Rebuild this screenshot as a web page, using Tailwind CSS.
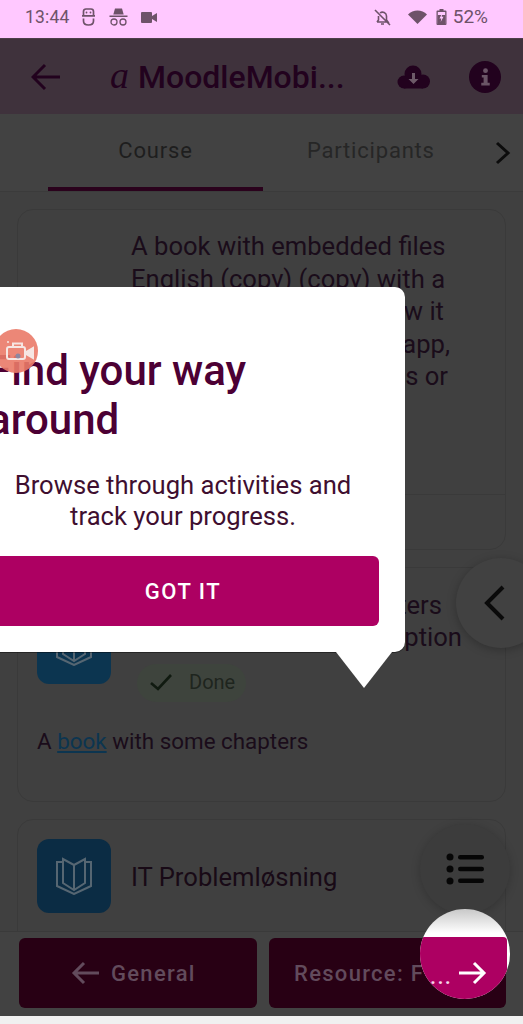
<!DOCTYPE html>
<html lang="en">
<head>
    <meta charset="UTF-8">
    <meta name="viewport" content="width=device-width, initial-scale=1.0">
    <title>MoodleMobile</title>
    <script src="https://cdn.jsdelivr.net/npm/@tailwindcss/browser@4"></script>
</head>
<body class="bg-[#f0f0f0]">
<div class="relative w-[523px] h-[1024px] overflow-hidden flex flex-col font-['Roboto',sans-serif] text-[#2a1027]">

    <!-- Status bar -->
    <div class="h-[38px] shrink-0 bg-[#ffc8ff] flex items-center pb-[4px] pl-[25px] pr-[35px] text-[#6e5269]">
        <span class="text-[17.5px] tracking-[0.2px]">13:44</span>
        <svg class="ml-[12px] w-[13px] h-[18px]" viewBox="0 0 13 18" fill="none" stroke="currentColor" stroke-width="1.700"><path d="M1.500 7V3.500C1.500 2 2.500 1 4 1h5c1.500 0 2.500 1 2.500 2.500V7M0 7.800h13M1.500 10.500v2.500c0 2.500 2 4 5 4s5-1.500 5-4v-2.500"/><circle cx="4.500" cy="4.500" r=".9" fill="currentColor" stroke="none"/><circle cx="8.500" cy="4.500" r=".9" fill="currentColor" stroke="none"/></svg>
        <svg class="ml-[14px] w-[19px] h-[18px]" viewBox="0 0 19 18" fill="currentColor"><path d="M6 0.500h7l1.700 6H4.300zM0.500 7.500h18v1.600H0.500z"/><circle cx="5" cy="14" r="3" fill="none" stroke="currentColor" stroke-width="1.300"/><circle cx="14" cy="14" r="3" fill="none" stroke="currentColor" stroke-width="1.300"/></svg>
        <svg class="ml-[13px] w-[16px] h-[11px]" viewBox="0 0 16 11" fill="currentColor"><rect width="11" height="11" rx="1"/><path d="M11 4l5-3v9l-5-3z"/></svg>
        <svg class="ml-auto w-[17px] h-[17px]" viewBox="0 0 17 17" fill="none" stroke="currentColor" stroke-width="1.600"><path d="M3 13h11l-1.500-2V7A4 4 0 0 0 6 4M4.500 7v4L3 13M7 15h3M1 1l15 15"/></svg>
        <svg class="ml-[17px] w-[19px] h-[14px]" viewBox="0 0 19 14" fill="currentColor"><path d="M0 4.500C5-1 14-1 19 4.500L9.500 14z"/></svg>
        <svg class="ml-[9px] w-[11px] h-[16px]" viewBox="0 0 10 16" fill="currentColor"><path d="M3 0h4v1.500h2a1 1 0 0 1 1 1V15a1 1 0 0 1-1 1H1a1 1 0 0 1-1-1V2.500a1 1 0 0 1 1-1h2zM1.300 3v11.700h7.400V3z"/><path d="M1.300 6h7.400v9H1.300z"/><path d="M5.800 4L3 9.500h1.800L4.200 13 7 7.800H5.200z" fill="#ffc8ff"/></svg>
        <span class="ml-[6px] text-[19px]">52%</span>
    </div>

    <!-- App bar -->
    <div class="h-[76px] shrink-0 bg-[#3f323c] border-t border-[#4d3e4a] flex items-center pl-[31px] pr-[22px] text-[#22021e]">
        <svg class="w-[29px] h-[28px]" viewBox="0 0 29 28" fill="none" stroke="currentColor" stroke-width="3"><path d="M29 14H3M14 2L2 14l12 12"/></svg>
        <span class="ml-[50px] mt-[-4px] font-['Liberation_Serif',serif] italic text-[38px] leading-none">a</span>
        <span class="ml-[9px] text-[32px] font-medium leading-none">MoodleMobi...</span>
        <svg class="ml-auto w-[33px] h-[24px]" viewBox="0 0 33 24" fill="currentColor"><circle cx="7" cy="17" r="6.500"/><circle cx="16" cy="9" r="8.500"/><circle cx="26" cy="16.500" r="7"/><rect x="7" y="12" width="19" height="11.500"/><path d="M15 8h3v6h3.500l-5 5-5-5H15z" fill="#6d5a68"/></svg>
        <div class="ml-[39px] w-[32px] h-[32px] rounded-full bg-current flex items-center justify-center">
            <svg class="w-[11px] h-[18px]" viewBox="0 0 10 17" fill="#6a5566"><circle cx="5" cy="2.500" r="2.300"/><path d="M1.500 6.500h5.500v7.500H9v2.500H1v-2.500h2.200v-5H1.500z"/></svg>
        </div>
    </div>

    <!-- Tabs -->
    <div class="relative h-[78px] shrink-0 bg-[#424242] border-b border-[#3b3b3b] flex text-[22px] tracking-[0.8px] text-[#1e1e1e]">
        <div class="ml-[48px] w-[215px] h-full flex justify-center pt-[20px] border-b-[4px] border-[#2a021c]">Course</div>
        <div class="ml-[44px] pt-[20px] text-[#262626]">Participants</div>
        <svg class="absolute left-[495px] top-[27px] w-[16px] h-[24px]" viewBox="0 0 16 24" fill="none" stroke="#0c0c0c" stroke-width="3"><path d="M2 2l11 10L2 22"/></svg>
    </div>

    <!-- Course content -->
    <div class="flex-1 min-h-0 overflow-hidden bg-[#404040] px-[17px] pt-[17px] flex flex-col gap-[17px] text-[25.6px] leading-[32.500px] text-[#1a0c1a]">
        <div class="h-[341px] shrink-0 rounded-[16px] border border-[#3a3a3a] flex flex-col">
            <div class="flex-1 pl-[113px] pt-[20px]">
                <p>A book with embedded files</p>
                <p>English (copy) (copy) with a</p>
                <p class="text-right pr-[61px]">how it</p>
                <p class="text-right pr-[55px]">app,</p>
                <p class="text-right pr-[57px]">ss or</p>
            </div>
            <div class="h-[55px] border-t border-[#3a3a3a]"></div>
        </div>

        <div class="h-[235px] shrink-0 rounded-[16px] border border-[#3a3a3a] px-[19px] pt-[21px]">
            <div class="flex gap-[20px]">
                <div class="w-[74px] h-[74px] mt-[21px] shrink-0 rounded-[12px] bg-[#0c3550] flex items-center justify-center">
                    <svg class="w-[38px] h-[38px]" viewBox="0 0 38 38" fill="none" stroke="#566672" stroke-width="2"><path d="M19 8L8 2v24l11 7 11-7V2zM19 8v25M8 5H2v24l17 8 17-8V5h-6"/></svg>
                </div>
                <div class="flex-1">
                    <p class="text-right pr-[44px]">chapters</p>
                    <p class="text-right pr-[24px] mt-[-0.5px]">description</p>
                    <div class="mt-[10px] ml-[6px] w-[109px] h-[38px] rounded-full bg-[#3e443d] flex items-center pl-[13px] text-[20px] text-[#1e251e]">
                        <svg class="w-[22px] h-[17px] mr-[17px] shrink-0" viewBox="0 0 22 17" fill="none" stroke="#101a10" stroke-width="2.600"><path d="M1 9l7 6L21 1"/></svg>
                        Done
                    </div>
                </div>
            </div>
            <p class="mt-[23px] text-[22.4px] text-[#1a0c1a]">A <span class="underline underline-offset-2 text-[#0c3550]">book</span> with some chapters</p>
        </div>

        <div class="h-[150px] shrink-0 rounded-[16px] border border-[#3a3a3a] px-[19px] pt-[19px] flex items-start gap-[20px]">
            <div class="w-[74px] h-[74px] shrink-0 rounded-[12px] bg-[#0b2c44] flex items-center justify-center">
                <svg class="w-[38px] h-[38px]" viewBox="0 0 38 38" fill="none" stroke="#566672" stroke-width="2"><path d="M19 8L8 2v24l11 7 11-7V2zM19 8v25M8 5H2v24l17 8 17-8V5h-6"/></svg>
            </div>
            <p class="pt-[22px] text-[#180a16]">IT Problemløsning</p>
        </div>
    </div>

    <!-- Bottom navigation -->
    <div class="h-[85px] shrink-0 bg-[#424242] border-t border-[#3a3a3a] pt-[6px] pl-[19px] pr-[17px] flex gap-[12px] text-[22px] font-medium tracking-[1.300px] text-[#624b5c]">
        <div class="w-[238px] h-[70px] rounded-[6px] bg-[#280014] flex items-center pl-[52px] gap-[12px]">
            <svg class="w-[28px] h-[24px]" viewBox="0 0 28 24" fill="none" stroke="#624b5c" stroke-width="3"><path d="M28 12H3M13 2L3 12l10 10"/></svg>
            General
        </div>
        <div class="flex-1 h-[70px] rounded-[6px] bg-[#280014] flex items-center pl-[25px]">Resource: F</div>
    </div>
    <div class="h-[8px] shrink-0 bg-[#f0f0f0]"></div>

    <!-- Floating buttons -->
    <div class="absolute left-[456px] top-[558px] w-[90px] h-[90px] rounded-full bg-[#414141] shadow-[0_2px_10px_rgba(0,0,0,0.25)] flex items-center pl-[28px]">
        <svg class="w-[22px] h-[36px]" viewBox="0 0 22 36" fill="none" stroke="#0a0a0a" stroke-width="4"><path d="M19 2L3 18l16 16"/></svg>
    </div>
    <div class="absolute left-[420px] top-[824px] w-[90px] h-[90px] rounded-full bg-[#3c3c3c] shadow-[0_2px_10px_rgba(0,0,0,0.2)] flex items-center justify-center">
        <svg class="w-[38px] h-[32px]" viewBox="0 0 38 32" fill="#060606"><circle cx="4" cy="4" r="3.500"/><circle cx="4" cy="16" r="3.500"/><circle cx="4" cy="28" r="3.500"/><rect x="12" y="2" width="26" height="4.500" rx="2.200"/><rect x="12" y="13.800" width="26" height="4.500" rx="2.200"/><rect x="12" y="25.500" width="26" height="4.500" rx="2.200"/></svg>
    </div>

    <!-- Highlighted next button -->
    <div class="absolute left-[420px] top-[909px] w-[90px] h-[90px] rounded-full overflow-hidden bg-gradient-to-b from-[#c8c8c8] to-white to-[24px]">
        <div class="absolute left-0 top-[28px] w-[87px] h-[70px] rounded-tr-[4px] bg-[#ad0062]"></div>
        <span class="absolute left-[10px] top-[51px] text-[22px] font-medium tracking-[1.300px] text-[#f5d5e8]">...</span>
        <svg class="absolute left-[39px] top-[52px] w-[28px] h-[24px]" viewBox="0 0 28 24" fill="none" stroke="#fff" stroke-width="3"><path d="M0 12h25M15 2l10 10-10 10"/></svg>
    </div>

    <!-- Tooltip -->
    <div class="absolute left-[-39px] top-[287px] w-[444px] h-[365px] rounded-[10px] bg-white px-[26px] text-[#4c0034] shadow-[0_1px_0_rgba(0,0,0,0.4)]">
        <h2 class="ml-[1px] pt-[59px] text-[42px] leading-[49px] font-medium">Find your way<br>around</h2>
        <p class="mt-[26px] text-center text-[25.6px] leading-[31px] text-[#3f0f30]">Browse through activities and<br>track your progress.</p>
        <div class="mt-[24px] h-[70px] rounded-[6px] bg-[#ad0062] flex items-center justify-center text-white text-[22px] font-medium tracking-[1.500px]">GOT IT</div>
    </div>
    <div class="absolute left-[336px] top-[652px] w-[56px] h-[36px] bg-white [clip-path:polygon(0_0,100%_0,50%_100%)]"></div>

    <!-- Walkthrough mascot -->
    <div class="absolute left-[-6px] top-[329px] w-[44px] h-[44px] rounded-full bg-[#ea7a68]/90 flex items-center justify-center">
        <svg class="ml-[6px] mt-[-1px] w-[30px] h-[22px]" viewBox="0 0 30 22" fill="none" stroke="#f6e6e2" stroke-width="2"><circle cx="4" cy="2" r="1" fill="#f6e6e2" stroke="none"/><path d="M9 6V3.500h9V6"/><rect x="3" y="7" width="18" height="12" rx="2"/><path d="M22 12l7-4v10l-7-4z" fill="#f6e6e2"/><circle cx="14" cy="16" r="2.500" fill="#8d87a0" stroke="none"/></svg>
    </div>
</div>
</body>
</html>
